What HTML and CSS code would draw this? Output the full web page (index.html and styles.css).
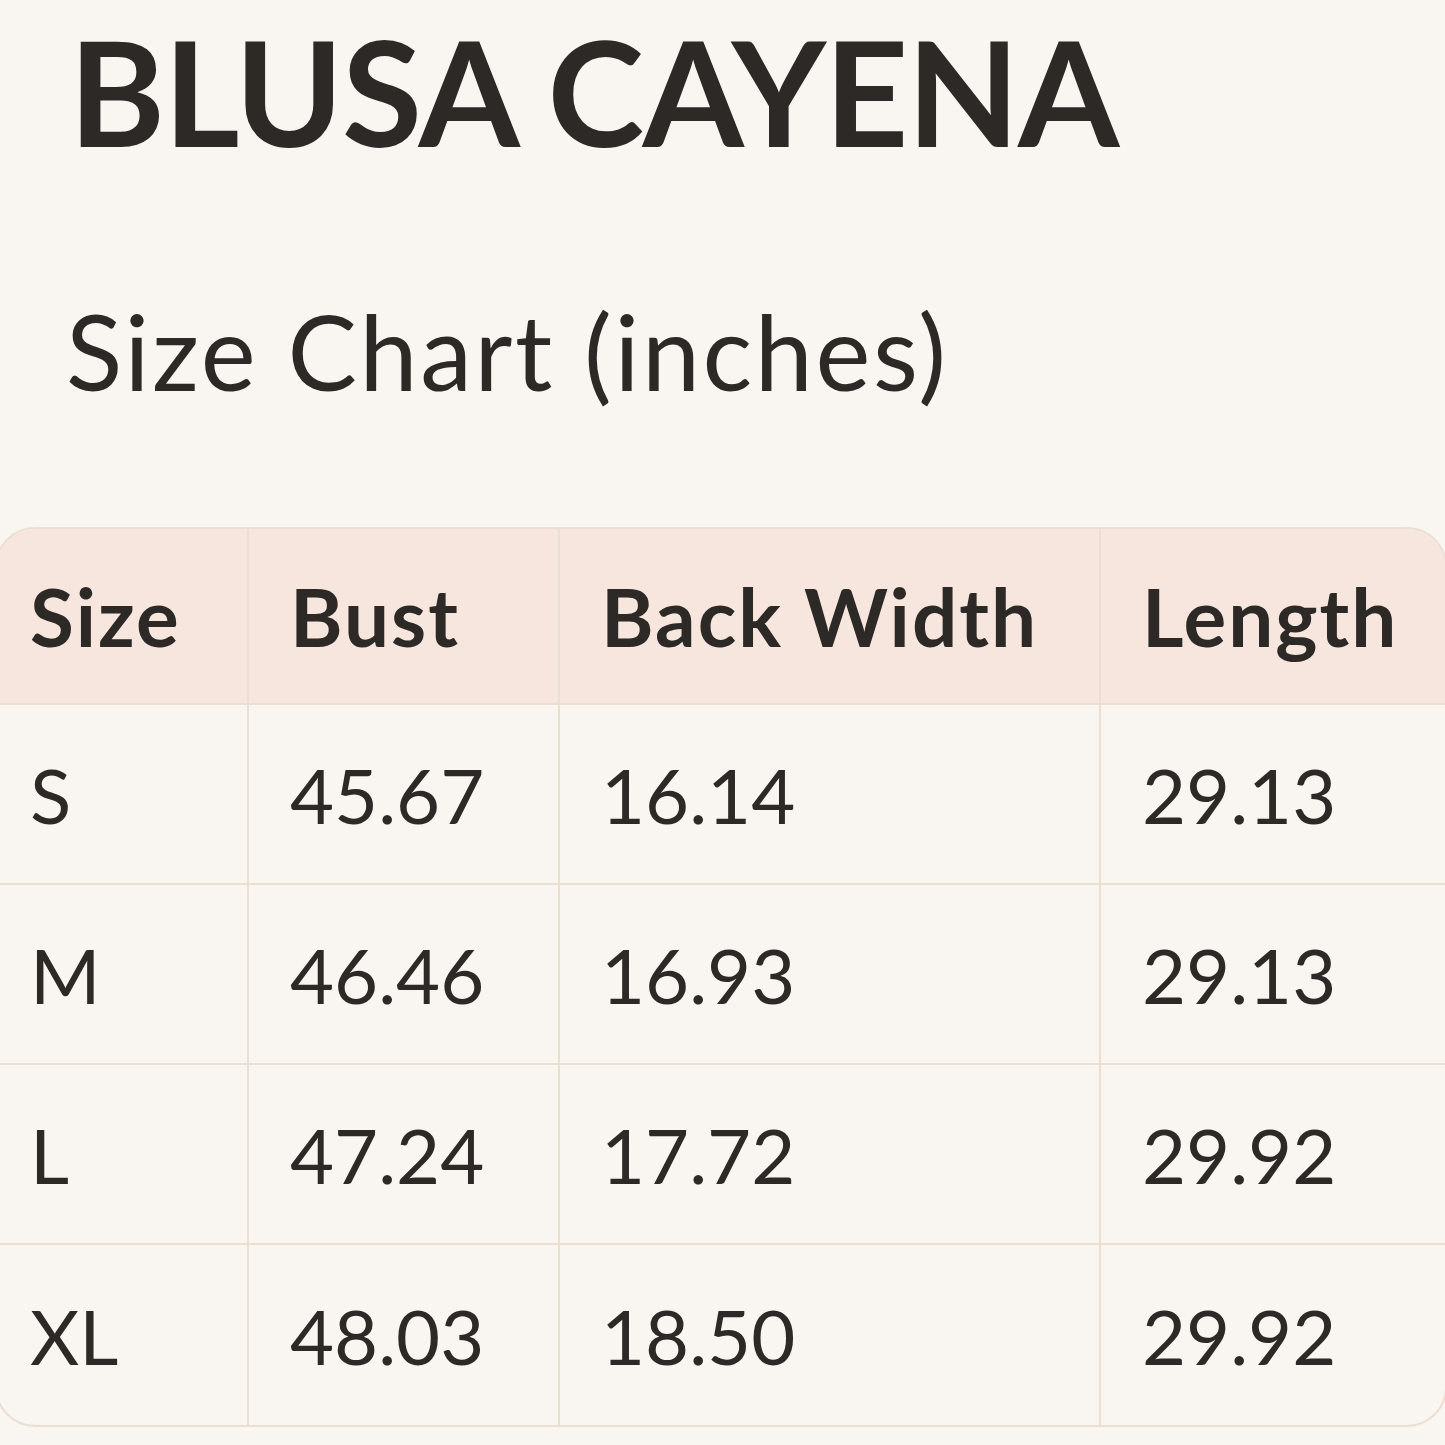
FILE: index.html
```html
<!DOCTYPE html>
<html>
<head>
<meta charset="utf-8">
<link rel="stylesheet" href="styles.css">
</head>
<body>
<main class="page">
  <h1 class="title">BLUSA CAYENA</h1>
  <h2 class="subtitle">Size Chart (inches)</h2>
  <div class="chart">
    <div class="cell head">Size</div>
    <div class="cell head">Bust</div>
    <div class="cell head">Back Width</div>
    <div class="cell head">Length</div>

    <div class="cell">S</div>
    <div class="cell">45.67</div>
    <div class="cell">16.14</div>
    <div class="cell">29.13</div>

    <div class="cell">M</div>
    <div class="cell">46.46</div>
    <div class="cell">16.93</div>
    <div class="cell">29.13</div>

    <div class="cell">L</div>
    <div class="cell">47.24</div>
    <div class="cell">17.72</div>
    <div class="cell">29.92</div>

    <div class="cell last">XL</div>
    <div class="cell last">48.03</div>
    <div class="cell last">18.50</div>
    <div class="cell last">29.92</div>
  </div>
</main>
</body>
</html>
```
FILE: styles.css
```css
html, body {
  margin: 0;
  padding: 0;
  background: #f9f5f0;
}
body {
  font-family: "Lato", "Noto Sans", sans-serif;
  color: #2d2926;
  width: 1445px;
  height: 1445px;
  overflow: hidden;
}
.page {
  display: flex;
  flex-direction: column;
}
.title {
  margin: 16px 0 0 69px;
  font-size: 146px;
  font-weight: 700;
  line-height: 150px;
  letter-spacing: -1.5px;
}
.subtitle {
  margin: 125px 0 0 66px;
  font-size: 104px;
  font-weight: 400;
  line-height: 120px;
  letter-spacing: 2.6px;
}
.chart {
  margin: 116px 0 0 -5px;
  width: 1452px;
  display: grid;
  grid-template-columns: 252px 311px 541px 348px;
  grid-template-rows: 176px repeat(4, 180px);
  border: 2px solid #ebdfd2;
  border-radius: 40px;
  overflow: hidden;
  box-sizing: border-box;
}
.cell {
  display: flex;
  align-items: center;
  padding-left: 41px;
  font-size: 76px;
  border-right: 2px solid #ebdfd2;
  border-bottom: 2px solid #ebdfd2;
  box-sizing: border-box;
}
.cell:nth-child(4n) {
  border-right: none;
}
.cell:nth-child(4n+1) {
  padding-left: 33px;
}
.cell.last {
  border-bottom: none;
}
.head {
  background: #f6e6de;
  font-weight: 700;
  font-size: 80px;
  letter-spacing: 2px;
}
```
